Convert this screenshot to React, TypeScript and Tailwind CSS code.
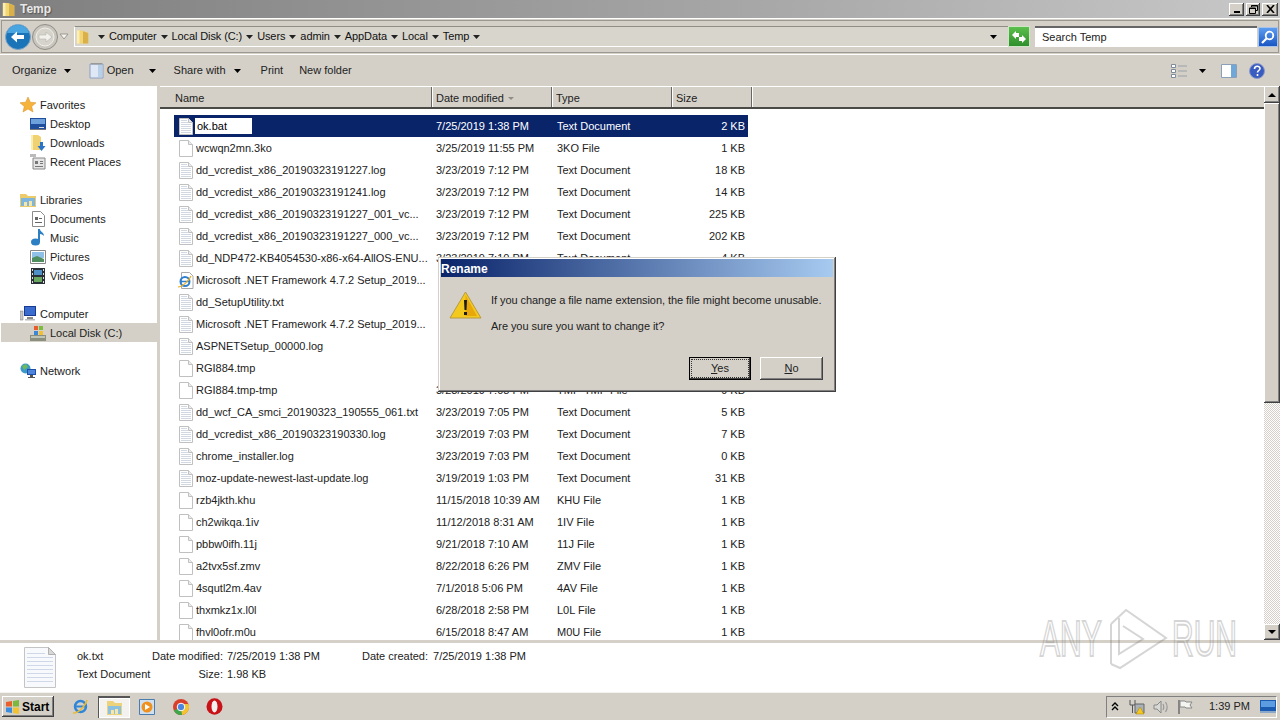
import type { ReactNode } from 'react';

type Kind = 'doc' | 'blank' | 'ie';

interface Row {
  name: string;
  date: string;
  type: string;
  size: string;
  icon: Kind;
}

// rows behind the dialog only show their name
const ROWS: Row[] = [
  { name: 'wcwqn2mn.3ko', date: '3/25/2019 11:55 PM', type: '3KO File', size: '1 KB', icon: 'blank' },
  { name: 'dd_vcredist_x86_20190323191227.log', date: '3/23/2019 7:12 PM', type: 'Text Document', size: '18 KB', icon: 'doc' },
  { name: 'dd_vcredist_x86_20190323191241.log', date: '3/23/2019 7:12 PM', type: 'Text Document', size: '14 KB', icon: 'doc' },
  { name: 'dd_vcredist_x86_20190323191227_001_vc...', date: '3/23/2019 7:12 PM', type: 'Text Document', size: '225 KB', icon: 'doc' },
  { name: 'dd_vcredist_x86_20190323191227_000_vc...', date: '3/23/2019 7:12 PM', type: 'Text Document', size: '202 KB', icon: 'doc' },
  { name: 'dd_NDP472-KB4054530-x86-x64-AllOS-ENU...', date: '3/23/2019 7:10 PM', type: 'Text Document', size: '4 KB', icon: 'doc' },
  { name: 'Microsoft .NET Framework 4.7.2 Setup_2019...', date: '', type: '', size: '', icon: 'ie' },
  { name: 'dd_SetupUtility.txt', date: '', type: '', size: '', icon: 'doc' },
  { name: 'Microsoft .NET Framework 4.7.2 Setup_2019...', date: '', type: '', size: '', icon: 'doc' },
  { name: 'ASPNETSetup_00000.log', date: '', type: '', size: '', icon: 'doc' },
  { name: 'RGI884.tmp', date: '', type: '', size: '', icon: 'blank' },
  { name: 'RGI884.tmp-tmp', date: '3/23/2019 7:08 PM', type: 'TMP-TMP File', size: '9 KB', icon: 'blank' },
  { name: 'dd_wcf_CA_smci_20190323_190555_061.txt', date: '3/23/2019 7:05 PM', type: 'Text Document', size: '5 KB', icon: 'doc' },
  { name: 'dd_vcredist_x86_20190323190330.log', date: '3/23/2019 7:03 PM', type: 'Text Document', size: '7 KB', icon: 'doc' },
  { name: 'chrome_installer.log', date: '3/23/2019 7:03 PM', type: 'Text Document', size: '0 KB', icon: 'doc' },
  { name: 'moz-update-newest-last-update.log', date: '3/19/2019 1:03 PM', type: 'Text Document', size: '31 KB', icon: 'doc' },
  { name: 'rzb4jkth.khu', date: '11/15/2018 10:39 AM', type: 'KHU File', size: '1 KB', icon: 'blank' },
  { name: 'ch2wikqa.1iv', date: '11/12/2018 8:31 AM', type: '1IV File', size: '1 KB', icon: 'blank' },
  { name: 'pbbw0ifh.11j', date: '9/21/2018 7:10 AM', type: '11J File', size: '1 KB', icon: 'blank' },
  { name: 'a2tvx5sf.zmv', date: '8/22/2018 6:26 PM', type: 'ZMV File', size: '1 KB', icon: 'blank' },
  { name: '4squtl2m.4av', date: '7/1/2018 5:06 PM', type: '4AV File', size: '1 KB', icon: 'blank' },
  { name: 'thxmkz1x.l0l', date: '6/28/2018 2:58 PM', type: 'L0L File', size: '1 KB', icon: 'blank' },
  { name: 'fhvl0ofr.m0u', date: '6/15/2018 8:47 AM', type: 'M0U File', size: '1 KB', icon: 'blank' },
];

const RAISED =
  'bg-[#d4d0c8] shadow-[inset_-1px_-1px_0_#404040,inset_1px_1px_0_#fff,inset_-2px_-2px_0_#808080]';

function Caret({ dark = false }: { dark?: boolean }) {
  return (
    <svg width="7" height="4" viewBox="0 0 7 4" className="shrink-0">
      <path d="M0 0h7L3.5 4z" fill={dark ? '#000' : '#222'} />
    </svg>
  );
}

function FolderIcon({ w = 16, h = 18 }: { w?: number; h?: number }) {
  return (
    <svg width={w} height={h} viewBox="0 0 16 18">
      <path d="M1 2h6l7 3v12H1z" fill="#f2d675" />
      <path d="M8 3l6 2v12H8z" fill="#d9b04a" />
      <path d="M1 2h3v15H1z" fill="#fbeeb0" />
    </svg>
  );
}

function DocIcon({ kind }: { kind: Kind }) {
  if (kind === 'ie') {
    return (
      <svg width="18" height="17" viewBox="0 0 18 17">
        <path d="M4.500.5h8l3.500 3.500v12.500H4.500z" fill="#fff" stroke="#a8a8a8" />
        <circle cx="8" cy="9.500" r="4.500" fill="none" stroke="#2f7fd0" strokeWidth="2" />
        <path d="M4 9.500h8" stroke="#2f7fd0" strokeWidth="1.500" />
        <path d="M1 15c4 0 11-6 13-11" stroke="#e8b020" strokeWidth="1.200" fill="none" />
      </svg>
    );
  }
  return (
    <svg width="14" height="17" viewBox="0 0 14 17">
      <path d="M.5.5h9l4 4v12H.5z" fill="#fff" stroke="#c0c0c0" />
      <path d="M9.500.5v4h4" fill="#ececec" stroke="#c0c0c0" />
      {kind === 'doc' && (
        <path d="M2 2.500h6M2 4.500h7M2 6.500h10M2 8.500h10M2 10.500h10M2 12.500h10M2 14.500h10" stroke="#d2d8e2" strokeWidth="1" />
      )}
    </svg>
  );
}

function BigDoc() {
  return (
    <svg width="32" height="41" viewBox="0 0 32 41">
      <path d="M.5.5h24l7 7v33H.5z" fill="#f8f9fc" stroke="#c4c4c4" />
      <path d="M24.500.5v7h7z" fill="#d8d8d8" stroke="#b0b0b0" />
      <path
        d="M3 6.500h18M3 10.500h26M3 14.500h26M3 18.500h26M3 22.500h26M3 26.500h26M3 30.500h26M3 34.500h26"
        stroke="#cfd8e8"
      />
    </svg>
  );
}

function NavIcon({ name }: { name: string }) {
  switch (name) {
    case 'star':
      return (
        <svg width="16" height="16" viewBox="0 0 16 16">
          <path d="M8 0l2.300 5.200 5.700.6-4.300 3.700 1.300 5.500L8 12l-5 3 1.300-5.500L0 5.800l5.700-.6z" fill="#f5b33c" stroke="#d98a20" strokeWidth=".5" />
        </svg>
      );
    case 'desktop':
      return (
        <svg width="16" height="14" viewBox="0 0 16 14">
          <path d="M0 1h16v11H0z" fill="#1f4f9c" />
          <path d="M1 2h14v5H1z" fill="#6ea0dc" />
          <path d="M0 12h16v1H0z" fill="#777" />
          <path d="M9 10h5v1H9z" fill="#ddd" />
        </svg>
      );
    case 'downloads':
      return (
        <svg width="16" height="16" viewBox="0 0 16 16">
          <path d="M1 0h7l3 2v13H1z" fill="#f0d272" />
          <path d="M1 0h2v15H1z" fill="#fbeeb0" />
          <path d="M10 7h3v4h2.500l-4 5-4-5H10z" fill="#2a74c8" />
        </svg>
      );
    case 'recent':
      return (
        <svg width="16" height="16" viewBox="0 0 16 16">
          <path d="M3 4h12v11H3z" fill="#e4e4e4" stroke="#888" />
          <path d="M5 7h3v3H5zM10 7h3v1h-3zM10 9h3v1h-3zM5 12h8v1H5z" fill="#777" />
          <path d="M0 0h6v3H0z" fill="#bbb" />
        </svg>
      );
    case 'libraries':
      return (
        <svg width="16" height="14" viewBox="0 0 16 14">
          <path d="M0 1h6l2 2h8v11H0z" fill="#eccb6a" />
          <path d="M1 5h14v8H1z" fill="#7fb6e0" />
          <path d="M4 13V9h3v4zM9 13V8h3v5z" fill="#f6e6a8" />
        </svg>
      );
    case 'documents':
      return (
        <svg width="13" height="16" viewBox="0 0 13 16">
          <path d="M.5.500h8l4 4v11H.5z" fill="#fff" stroke="#8a8a8a" />
          <path d="M3 6h3v3H3zM3 11h7v1H3zM7 7h3v1H7z" fill="#666" />
        </svg>
      );
    case 'music':
      return (
        <svg width="14" height="17" viewBox="0 0 14 17">
          <path d="M7 0h2c0 3 4 3 4 7-1-1-2-2-4-2v8H7z" fill="#2d7fc4" />
          <ellipse cx="4.500" cy="13" rx="4.500" ry="3.500" fill="#2d7fc4" />
        </svg>
      );
    case 'pictures':
      return (
        <svg width="16" height="14" viewBox="0 0 16 14">
          <path d="M.5.500h15v13H.5z" fill="#fff" stroke="#888" />
          <path d="M2 2h12v6H2z" fill="#8fc0e8" />
          <path d="M2 8l5-2 7 3v3H2z" fill="#4f8f5f" />
        </svg>
      );
    case 'videos':
      return (
        <svg width="14" height="16" viewBox="0 0 14 16">
          <path d="M0 0h14v16H0z" fill="#2a3038" />
          <path d="M3 2h8v5H3z" fill="#4f90c8" />
          <path d="M3 9h8v5H3z" fill="#6aa860" />
          <path d="M1 1h1v2H1zM1 5h1v2H1zM1 9h1v2H1zM1 13h1v2H1zM12 1h1v2h-1zM12 5h1v2h-1zM12 9h1v2h-1zM12 13h1v2h-1z" fill="#ddd" />
        </svg>
      );
    case 'computer':
      return (
        <svg width="16" height="15" viewBox="0 0 16 15">
          <path d="M0 5h3v9H0z" fill="#c8c8c8" stroke="#777" strokeWidth=".5" />
          <path d="M4 0h12v10H4z" fill="#1a3a90" />
          <path d="M5 1h10v8H5z" fill="#3a6cd0" />
          <path d="M7 11h6v2H7z" fill="#888" />
          <path d="M5 13h10v1.500H5z" fill="#bbb" />
        </svg>
      );
    case 'disk':
      return (
        <svg width="16" height="16" viewBox="0 0 16 16">
          <path d="M0 10h16v6H0z" fill="#8b8f7e" />
          <path d="M1 11h14v2H1z" fill="#c0c4b4" />
          <path d="M4 1h4v4H4z" fill="#e85c30" />
          <path d="M9 1h4v4H9z" fill="#7cbc3c" />
          <path d="M4 6h4v4H4z" fill="#3c88d8" />
          <path d="M9 6h4v4H9z" fill="#f0c030" />
        </svg>
      );
    default:
      return (
        <svg width="16" height="16" viewBox="0 0 16 16">
          <circle cx="5.500" cy="5.500" r="5" fill="#3d9ac8" />
          <path d="M2 3l4-2 2 3-4 3z" fill="#6cba5c" />
          <path d="M7 6h9v6H7z" fill="#1f4fa8" />
          <path d="M8 7h7v4H8z" fill="#4d84dc" />
          <path d="M10 12h3v2h2v1H8v-1h2z" fill="#555" />
        </svg>
      );
  }
}

function NavItem({ icon, label, top = false, active = false }: { icon: string; label: string; top?: boolean; active?: boolean }) {
  return (
    <div className={`h-[19px] flex items-center ${active ? 'bg-[#d4d0c8] ml-px' : ''}`}>
      <span className={`flex justify-center shrink-0 ${top ? 'ml-[19px] w-[18px]' : active ? 'ml-[28px] w-[18px]' : 'ml-[29px] w-[18px]'}`}>
        <NavIcon name={icon} />
      </span>
      <span className="ml-[3px] pt-[2px]">{label}</span>
    </div>
  );
}

function Crumb({ label }: { label: string }) {
  return (
    <>
      <Caret />
      <span className="text-[#111] tracking-[-0.1px]">{label}</span>
    </>
  );
}

function FileRow({ row }: { row: Row }) {
  return (
    <div className="h-[22px] flex items-center text-[#222] ml-[14px] w-[574px] shrink-0">
      <span className="w-[22px] flex justify-center ml-px mr-[-1px] shrink-0">
        <DocIcon kind={row.icon} />
      </span>
      <span className="w-[240px] truncate shrink-0">{row.name}</span>
      <span className="w-[120px] shrink-0">{row.date}</span>
      <span className="w-[120px] ml-px shrink-0">{row.type}</span>
      <span className="w-[68px] text-right shrink-0">{row.size}</span>
    </div>
  );
}

function HeaderCell({ width, children }: { width: string; children: ReactNode }) {
  return (
    <div className={`${width} h-full flex items-center pt-[2px] shrink-0 border-r border-r-[#666] shadow-[1px_0_0_#fff]`}>
      {children}
    </div>
  );
}

function TaskIcon({ children, active = false }: { children: ReactNode; active?: boolean }) {
  return (
    <div
      className={`h-[22px] w-[32px] flex items-center justify-center ${
        active ? 'bg-[#f4f2ee] border-t-2 border-l border-[#555] border-r-white border-b-white shadow-[inset_0_0_0_1px_#fff]' : ''
      }`}
    >
      {children}
    </div>
  );
}

function IeGlyph({ size = 17 }: { size?: number }) {
  return (
    <svg width={size} height={size} viewBox="0 0 17 17">
      <circle cx="8.500" cy="8.500" r="5.500" fill="none" stroke="#2f86d8" strokeWidth="2.500" />
      <path d="M3 8.500h11" stroke="#2f86d8" strokeWidth="2" />
      <path d="M1 15c4 1 12-6 14-13" stroke="#eab92c" strokeWidth="1.500" fill="none" />
    </svg>
  );
}

export default function App() {
  return (
    <div className="relative w-[1280px] h-[720px] overflow-hidden flex flex-col bg-white text-[11px] leading-none text-[#222] font-['Liberation_Sans',sans-serif]">
      {/* title bar */}
      <div className="h-[18px] shrink-0 flex items-center justify-between bg-[linear-gradient(90deg,#7f7f7f,#a8a8a8_60%,#c8c8c8)]">
        <div className="flex items-center pl-[2px] gap-[4px]">
          <FolderIcon w={14} h={16} />
          <span className="font-bold text-[12px] text-[#e8e8e8] [text-shadow:1px_1px_1px_#555]">Temp</span>
        </div>
        <div className="flex items-center gap-[2px] pr-[2px]">
          <div className={`${RAISED} w-[15px] h-[13px] flex items-end justify-center pb-[3px]`}>
            <div className="w-[6px] h-[2px] bg-black" />
          </div>
          <div className={`${RAISED} w-[14px] h-[13px] flex items-center justify-center`}>
            <svg width="9" height="9" viewBox="0 0 9 9">
              <path d="M2.500 2V.5h6v5H7M.5 3h6v5.500h-6z" fill="none" stroke="#000" />
              <path d="M.5 3.500h6M2.500 1h6" stroke="#000" />
            </svg>
          </div>
          <div className={`${RAISED} w-[16px] h-[13px] flex items-center justify-center`}>
            <svg width="9" height="8" viewBox="0 0 9 8">
              <path d="M1 0l7 8M8 0L1 8" stroke="#000" strokeWidth="1.600" />
            </svg>
          </div>
        </div>
      </div>

      {/* address row */}
      <div className="h-[36px] shrink-0 bg-[#d4d0c8] border-t border-t-white pt-px">
        <div className="h-[33px] ml-px mr-[1px] border border-[#f4f3f0] outline outline-[#9a9890] -outline-offset-1 flex items-center pl-[3px]">
          <div className="w-[69px] h-[26px] flex items-center shrink-0">
            <svg width="69" height="28" viewBox="0 0 69 28">
              <circle cx="13" cy="14" r="12.500" fill="#1b74b8" stroke="#7ea6c8" />
              <path d="M13 2a12 12 0 0 1 11 8H2A12 12 0 0 1 13 2z" fill="#4aa6e0" />
              <path d="M6 14l6-5.500V12h7v4h-7v3.500z" fill="#fff" />
              <circle cx="40" cy="14" r="12.500" fill="#c8c5bd" stroke="#8f8d86" />
              <circle cx="40" cy="14" r="9" fill="#d6d3cb" stroke="#f0efea" />
              <path d="M47 14l-6-5v3h-7v4h7v3z" fill="#f2f1ec" stroke="#aaa8a0" strokeWidth=".5" />
              <path d="M55 11h8l-4 5z" fill="#f4f3ef" stroke="#9a9890" />
            </svg>
          </div>
          <div className="h-[21px] w-[956px] shrink-0 flex items-center bg-[#d8d5cd] border-t border-t-[#8f8d86] border-b border-b-white border-l border-l-white pl-px">
            <FolderIcon w={14} h={17} />
            <div className="flex items-center gap-[4px] ml-[8px]">
              <Crumb label="Computer" />
              <Crumb label="Local Disk (C:)" />
              <Crumb label="Users" />
              <Crumb label="admin" />
              <Crumb label="AppData" />
              <Crumb label="Local" />
              <Crumb label="Temp" />
              <Caret />
            </div>
            <div className="flex-1" />
            <Caret dark />
            <div className="w-[22px] h-[21px] ml-[11px] bg-[linear-gradient(#5bbf4d,#2f8f2c)] border border-[#cfe6c4] flex items-center justify-center">
              <svg width="14" height="12" viewBox="0 0 14 12">
                <path d="M0 4l4-4v2h3v4H4v2zM14 8l-4 4v-2H7V6h3V4z" fill="#fff" />
              </svg>
            </div>
          </div>
          <div className="w-[222px] h-[21px] ml-[5px] bg-white border-t-2 border-t-[#666] flex items-center pl-[7px] text-[#222] shrink-0">
            Search Temp
          </div>
          <div className="w-[20px] h-[20px] ml-px bg-[linear-gradient(#5c9cf0,#1a56c4)] border border-[#a8c4e8] flex items-center justify-center shrink-0">
            <svg width="14" height="14" viewBox="0 0 14 14">
              <circle cx="8.500" cy="5.500" r="3.800" fill="none" stroke="#fff" strokeWidth="1.800" />
              <path d="M6 8l-5 5" stroke="#fff" strokeWidth="2.200" />
            </svg>
          </div>
        </div>
      </div>

      {/* toolbar */}
      <div className="h-[32px] shrink-0 bg-[#d4d0c8] border-t border-t-white flex items-center text-[#222]">
        <span className="ml-[12px]">Organize</span>
        <span className="ml-[7px]"><Caret dark /></span>
        <svg width="16" height="16" viewBox="0 0 16 16" className="ml-[18px]">
          <path d="M1 1h13v14H1z" fill="#dfe8f4" stroke="#8aa0c0" />
          <path d="M9 2h4v12H9z" fill="#b8cfe8" />
          <path d="M2 0h11v1.500H2z" fill="#999" />
        </svg>
        <span className="ml-[2px]">Open</span>
        <span className="ml-[15px]"><Caret dark /></span>
        <span className="ml-[18px]">Share with</span>
        <span className="ml-[8px]"><Caret dark /></span>
        <span className="ml-[20px]">Print</span>
        <span className="ml-[16px]">New folder</span>
        <div className="flex-1" />
        <svg width="17" height="14" viewBox="0 0 17 14" className="mr-[11px]">
          <path d="M.5.500h4v3h-4zM.5 5.500h4v3h-4zM.5 10.500h4v3h-4z" fill="#fff" stroke="#7c8a9a" />
          <path d="M7 2h9M7 7h9M7 12h9" stroke="#9aa0a8" />
        </svg>
        <span className="mr-[15px]"><Caret dark /></span>
        <svg width="16" height="14" viewBox="0 0 16 14" className="mr-[12px]">
          <path d="M.5.500h15v13H.5z" fill="#fff" stroke="#8aa0b8" />
          <path d="M10 1h5v12h-5z" fill="#6fa8d8" />
        </svg>
        <svg width="16" height="16" viewBox="0 0 16 16" className="mr-[15px]">
          <circle cx="8" cy="8" r="7.500" fill="#3a5cc0" stroke="#8a9ac8" />
          <path d="M5.500 6c0-3.500 5.500-3.500 5.500-.500 0 2-2.500 2-2.500 4M8.500 11v2" stroke="#fff" strokeWidth="1.600" fill="none" />
        </svg>
      </div>

      {/* main */}
      <div className="flex-1 min-h-0 flex">
        <nav className="w-[157px] shrink-0 pt-[9px] text-[#222] overflow-hidden">
          <NavItem icon="star" label="Favorites" top />
          <NavItem icon="desktop" label="Desktop" />
          <NavItem icon="downloads" label="Downloads" />
          <NavItem icon="recent" label="Recent Places" />
          <div className="h-[19px]" />
          <NavItem icon="libraries" label="Libraries" top />
          <NavItem icon="documents" label="Documents" />
          <NavItem icon="music" label="Music" />
          <NavItem icon="pictures" label="Pictures" />
          <NavItem icon="videos" label="Videos" />
          <div className="h-[19px]" />
          <NavItem icon="computer" label="Computer" top />
          <NavItem icon="disk" label="Local Disk (C:)" active />
          <div className="h-[19px]" />
          <NavItem icon="network" label="Network" top />
        </nav>
        <div className="w-[3px] shrink-0 bg-[#d4d0c8]" />

        <div className="flex-1 min-w-0 flex flex-col">
          <div className="h-[23px] shrink-0 bg-[#d4d0c8] border-t border-t-white border-b-2 border-b-[#4a4a46] flex items-center text-[#222]">
            <HeaderCell width="w-[272px]"><span className="ml-[15px]">Name</span></HeaderCell>
            <HeaderCell width="w-[120px]">
              <span className="ml-[4px]">Date modified</span>
              <svg width="6" height="3" viewBox="0 0 6 3" className="ml-[4px]">
                <path d="M0 0h6L3 3z" fill="#8f8d86" />
              </svg>
            </HeaderCell>
            <HeaderCell width="w-[120px]"><span className="ml-[4px]">Type</span></HeaderCell>
            <HeaderCell width="w-[80px]"><span className="ml-[4px]">Size</span></HeaderCell>
          </div>
          <div className="flex-1 min-h-0 overflow-hidden pt-[6px] flex flex-col">
            <div className="h-[22px] shrink-0 ml-[14px] w-[574px] flex items-center bg-[#0a246a] text-white">
              <span className="w-[22px] flex justify-center ml-px shrink-0">
                <DocIcon kind="doc" />
              </span>
              <span className="w-[57px] h-[16px] bg-white text-black flex items-center pl-[2px] ml-[-2px] shrink-0">ok.bat</span>
              <span className="ml-[184px] w-[120px] shrink-0">7/25/2019 1:38 PM</span>
              <span className="w-[120px] ml-px shrink-0">Text Document</span>
              <span className="w-[68px] text-right shrink-0">2 KB</span>
            </div>
            {ROWS.map((row, i) => (
              <FileRow key={i} row={row} />
            ))}
          </div>
        </div>

        {/* scrollbar */}
        <div className="w-[16px] shrink-0 flex flex-col">
          <div className={`${RAISED} h-[17px] shrink-0 flex items-center justify-center`}>
            <svg width="8" height="4" viewBox="0 0 8 4"><path d="M4 0l4 4H0z" fill="#000" /></svg>
          </div>
          <div className={`${RAISED} h-[300px] shrink-0`} />
          <div className="flex-1 bg-[repeating-conic-gradient(#d4d0c8_0_25%,#fff_0_50%)] bg-[length:2px_2px]" />
          <div className={`${RAISED} h-[16px] shrink-0 flex items-center justify-center`}>
            <svg width="8" height="4" viewBox="0 0 8 4"><path d="M0 0h8L4 4z" fill="#000" /></svg>
          </div>
        </div>
      </div>

      {/* details pane */}
      <div className="h-[52px] shrink-0 border-t-[3px] border-t-[#d4d0c8] flex items-center bg-white text-[#222]">
        <div className="ml-[24px] w-[53px] shrink-0"><BigDoc /></div>
        <div className="w-[75px] shrink-0 self-start mt-[8px] flex flex-col gap-[7px]">
          <span>ok.txt</span>
          <span>Text Document</span>
        </div>
        <div className="w-[71px] shrink-0 self-start mt-[8px] flex flex-col gap-[7px] text-right whitespace-nowrap">
          <span>Date modified:</span>
          <span>Size:</span>
        </div>
        <div className="ml-[4px] w-[135px] shrink-0 self-start mt-[8px] flex flex-col gap-[7px]">
          <span>7/25/2019 1:38 PM</span>
          <span>1.98 KB</span>
        </div>
        <div className="flex self-start mt-[8px] whitespace-nowrap">
          <span>Date created:</span>
          <span className="ml-[5px]">7/25/2019 1:38 PM</span>
        </div>
      </div>

      {/* taskbar */}
      <div className="h-[28px] shrink-0 bg-[#d4d0c8] border-t border-t-[#f4f3f0] flex items-center">
        <div className={`${RAISED} ml-[2px] w-[52px] h-[21px] flex items-center pl-[3px] gap-[2px] font-bold text-[12px] text-black`}>
          <svg width="15" height="14" viewBox="0 0 15 14">
            <path d="M1 2l6-1v5.500H1z" fill="#e8602c" />
            <path d="M8 1l6-1v6.500H8z" fill="#7cb83c" />
            <path d="M1 7.500h6V13l-6-1z" fill="#3c8ce0" />
            <path d="M8 7.500h6V14l-6-1z" fill="#f2c230" />
          </svg>
          Start
        </div>
        <div className="ml-[10px] flex items-center gap-[1.5px]">
          <TaskIcon><IeGlyph /></TaskIcon>
          <TaskIcon active>
            <svg width="17" height="14" viewBox="0 0 17 14">
              <path d="M1 0h6l2 2h7v12H1z" fill="#ecd27a" />
              <path d="M2 5h13v8H2z" fill="#8cc0e0" />
              <path d="M5 13V9h3v4zM9 13V8h3v5z" fill="#f6e6a8" />
            </svg>
          </TaskIcon>
          <TaskIcon>
            <svg width="16" height="16" viewBox="0 0 16 16">
              <path d="M.5.500h15v15H.5z" fill="#cfe0f0" stroke="#4a7cb0" />
              <circle cx="8" cy="8" r="5.500" fill="#f09020" />
              <path d="M6 5l5 3-5 3z" fill="#fff" />
            </svg>
          </TaskIcon>
          <TaskIcon>
            <svg width="16" height="16" viewBox="0 0 16 16">
              <circle cx="8" cy="8" r="8" fill="#d8402c" />
              <path d="M8 8L.9 11.500A8 8 0 0 0 9 15.900z" fill="#3ca84c" />
              <path d="M8 8l1 7.900A8 8 0 0 0 15.500 5H8z" fill="#f4c430" />
              <circle cx="8" cy="8" r="3.800" fill="#4a86e0" stroke="#fff" />
            </svg>
          </TaskIcon>
          <TaskIcon>
            <svg width="17" height="17" viewBox="0 0 17 17">
              <ellipse cx="8.500" cy="8.500" rx="8" ry="8.300" fill="#c81218" />
              <ellipse cx="8.500" cy="8.500" rx="3" ry="6" fill="#f4f0f0" />
            </svg>
          </TaskIcon>
        </div>
        <div className="flex-1" />
        <div className="w-[171px] h-[22px] mr-[3px] shrink-0 border border-[#808080] border-r-white border-b-white flex items-center text-[#222]">
          <svg width="8" height="9" viewBox="0 0 8 9" className="ml-[4px]">
            <path d="M1 4l3-3 3 3M1 8l3-3 3 3" stroke="#000" strokeWidth="1.400" fill="none" />
          </svg>
          <svg width="16" height="16" viewBox="0 0 16 16" className="ml-[10px]">
            <path d="M1 1v5h5V1M3.500 6v8" stroke="#555" fill="none" />
            <path d="M6 5h9v9H6z" fill="#a8b0b8" stroke="#666" />
            <path d="M11 8l4 7H7z" fill="#f4c820" stroke="#a88000" strokeWidth=".5" />
          </svg>
          <svg width="16" height="14" viewBox="0 0 16 14" className="ml-[8px]">
            <path d="M1 5h3l4-4v12L4 9H1z" fill="#d8d8d4" stroke="#888" />
            <path d="M10 4c1 2 1 4 0 6M12.500 2c2 3 2 7 0 10" stroke="#999" fill="none" strokeWidth="1.200" />
          </svg>
          <svg width="16" height="16" viewBox="0 0 16 16" className="ml-[8px]">
            <path d="M2 1v14" stroke="#666" strokeWidth="1.400" />
            <path d="M3 2h5l1 1h6l-2 3 2 3H9L8 8H3z" fill="#f4f4f0" stroke="#888" />
          </svg>
          <span className="ml-[16px] w-[51px] shrink-0">1:39 PM</span>
          <svg width="16" height="13" viewBox="0 0 16 13">
            <path d="M0 0h16v13H0z" fill="#1c5cb0" />
            <path d="M1 1h14v6H1z" fill="#5c9ce0" />
            <path d="M0 11h16v2H0z" fill="#8aa8c8" />
          </svg>
        </div>
      </div>

      {/* rename dialog */}
      <div className="absolute left-[438px] top-[257px] w-[398px] h-[135px] flex flex-col p-[2px] bg-[#d4d0c8] shadow-[inset_-1px_-1px_0_#404040,inset_1px_1px_0_#d4d0c8,inset_-2px_-2px_0_#808080,inset_2px_2px_0_#fff]">
        <div className="h-[18px] shrink-0 mx-px flex items-center pt-px bg-[linear-gradient(90deg,#0a246a,#a6caf0)] text-white font-bold text-[12px]">
          Rename
        </div>
        <div className="flex pl-[9px] pt-[14px]">
          <svg width="33" height="29" viewBox="0 0 33 29" className="shrink-0">
            <path d="M16.500 1L32 27H1z" fill="#f4c91e" stroke="#b89a40" />
            <path d="M16.500 4L28 25H16.500z" fill="#e8a80c" />
            <path d="M15 9h3l-.5 10h-2zM15 21h3v3h-3z" fill="#1c1c1c" />
          </svg>
          <div className="ml-[9px] pt-[4px] flex flex-col gap-[15px] text-[#222] tracking-[-0.06px]">
            <span>If you change a file name extension, the file might become unusable.</span>
            <span>Are you sure you want to change it?</span>
          </div>
        </div>
        <div className="flex pl-[249px] mt-[25px] gap-[9px]">
          <div className="w-[62px] h-[23px] bg-[#d4d0c8] border border-black p-[1px] shadow-[inset_-1px_-1px_0_#404040]">
            <div className="w-full h-full border border-dotted border-[#333] flex items-center justify-center">
              <span><span className="underline">Y</span>es</span>
            </div>
          </div>
          <div className={`${RAISED} w-[63px] h-[23px] flex items-center justify-center`}>
            <span><span className="underline">N</span>o</span>
          </div>
        </div>
      </div>

      {/* watermark */}
      <div className="absolute left-[1040px] top-[608px] w-[192px] h-[62px] flex items-center opacity-30 pointer-events-none">
        <span className="w-[60px] text-[50px] scale-x-[0.6] origin-left text-transparent [-webkit-text-stroke:2px_#777] whitespace-nowrap">ANY</span>
        <svg width="60" height="62" viewBox="0 0 60 62" className="ml-[8px] shrink-0">
          <path d="M3 16v40M11 10v36l24-15L15 18" fill="none" stroke="#777" strokeWidth="2" />
          <path d="M3 16L18 2l40 28-46 30-9-4" fill="none" stroke="#777" strokeWidth="2" />
        </svg>
        <span className="w-[60px] text-[50px] ml-[4px] scale-x-[0.6] origin-left text-transparent [-webkit-text-stroke:2px_#777] whitespace-nowrap">RUN</span>
      </div>
    </div>
  );
}
